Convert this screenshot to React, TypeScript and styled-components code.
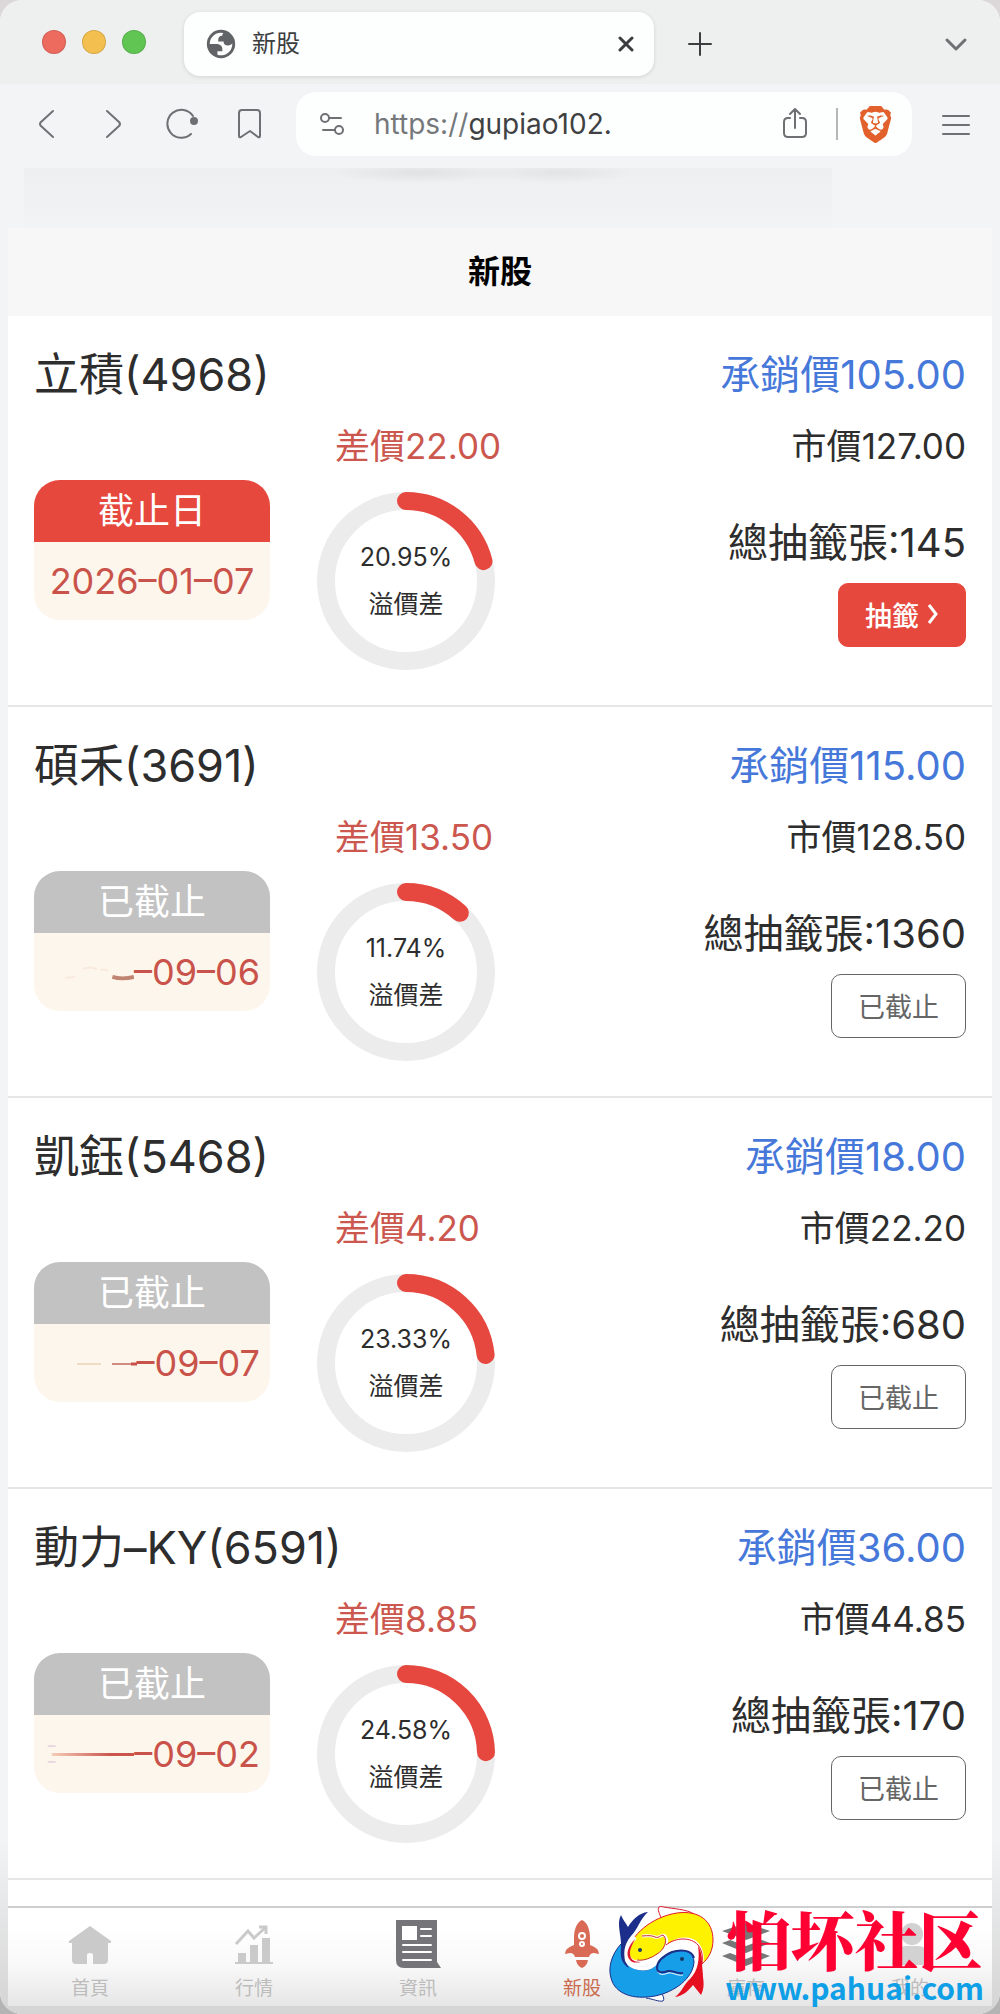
import type { ReactNode } from "react";
import styled, { createGlobalStyle } from "styled-components";
import { SiBrave } from "react-icons/si";

const GlobalStyle = createGlobalStyle`
  * {
    box-sizing: border-box;
  }

  body {
    margin: 0;
    background: linear-gradient(#dcd8d9, #b4b4b4);
    font-family: Inter, "Noto Sans CJK TC", sans-serif;
    color: #2d2d2d;
  }

  button {
    font-family: inherit;
    cursor: pointer;
  }
`;

const Window = styled.div`
  display: flex;
  flex-direction: column;
  min-height: 100vh;
  border-radius: 22px;
  overflow: hidden;
  background: #f3f4f6;
`;

const TabBar = styled.header`
  display: flex;
  align-items: center;
  height: 84px;
  padding: 4px 0 0 42px;
  background: #eeefef;
`;

const TrafficLights = styled.div`
  display: flex;
  gap: 16px;
  margin-right: 38px;
  margin-bottom: 4px;
`;

const Light = styled.span<{ $color: string }>`
  width: 24px;
  height: 24px;
  border: 1px solid rgba(0, 0, 0, 0.12);
  border-radius: 50%;
  background: ${(props) => props.$color};
`;

const Tab = styled.div`
  display: flex;
  flex: 0 1 470px;
  align-items: center;
  height: 64px;
  padding: 0 12px 0 20px;
  border-radius: 16px;
  background: #fdfefe;
  box-shadow: 0 1px 4px rgba(0, 0, 0, 0.12);
`;

const TabTitle = styled.span`
  flex: 1;
  margin-left: 14px;
  font-family: Inter, "Noto Sans CJK SC", sans-serif;
  font-size: 24px;
  line-height: 32px;
  color: #3b3d3f;
`;

const IconButton = styled.button<{ $width: number }>`
  display: flex;
  flex: 0 0 ${(props) => props.$width}px;
  align-items: center;
  justify-content: center;
  height: 64px;
  padding: 0;
  border: none;
  background: none;
  color: #6e7173;
`;

const TabListButton = styled(IconButton)`
  margin-left: auto;
`;

const Toolbar = styled.div`
  display: flex;
  align-items: center;
  height: 84px;
  padding: 0 0 4px 12px;
`;

const AddressBar = styled.div`
  display: flex;
  flex: 1;
  align-items: center;
  min-width: 0;
  height: 64px;
  margin-left: 12px;
  border-radius: 20px;
  background: #fdfefe;
`;

const Address = styled.a`
  flex: 1;
  margin-left: 6px;
  font-size: 28px;
  line-height: 36px;
  color: #3f4143;
  text-decoration: none;
`;

const Scheme = styled.span`
  color: #75787a;
`;

const Divider = styled.span`
  width: 2px;
  height: 32px;
  background: #b6b7b8;
`;

const ScrolledStrip = styled.div`
  height: 60px;
  margin-right: 168px;
  margin-left: 24px;
  background:
    radial-gradient(ellipse 90px 10px at 49% 5px, rgba(0, 0, 0, 0.06), transparent),
    radial-gradient(ellipse 80px 10px at 66% 5px, rgba(0, 0, 0, 0.05), transparent),
    linear-gradient(#eeeff1, #f2f3f5);
`;

const Page = styled.main`
  display: flex;
  flex: 1;
  flex-direction: column;
  padding: 0 8px 8px;
  background: linear-gradient(#f3f4f6 90%, #d4d4d4);
`;

const PageTitle = styled.h1`
  margin: 0;
  font-size: 32px;
  line-height: 88px;
  text-align: center;
  color: #000;
  background: #f7f7f7;
`;

const StockList = styled.ul`
  flex: 1;
  margin: 0;
  padding: 0;
  list-style: none;
  background: #fff;
`;

const StockRow = styled.li`
  padding: 30px 26px 35px;
  border-bottom: 2px solid #e6e6e7;
`;

const StockHeading = styled.div`
  display: flex;
  justify-content: space-between;
  line-height: 58px;
`;

const StockName = styled.h2`
  margin: 0;
  font-size: 45px;
  font-weight: 400;
`;

const OfferPrice = styled.span`
  font-size: 40px;
  color: #4678da;
`;

const StockBody = styled.div`
  display: grid;
  grid-template-columns: 236px 178px 1fr;
  column-gap: 47px;
  margin-top: 16px;
`;

const DeadlineCard = styled.div`
  align-self: start;
  height: 140px;
  margin-top: 60px;
  border-radius: 26px;
  overflow: hidden;
  background: #fdf6ec;
`;

const DeadlineLabel = styled.div<{ $open: boolean }>`
  font-size: 36px;
  line-height: 62px;
  text-align: center;
  color: #fff;
  background: ${(props) => (props.$open ? "#e6483d" : "#c2c2c2")};
`;

const DeadlineDate = styled.div<{ $open: boolean }>`
  display: flex;
  justify-content: ${(props) => (props.$open ? "center" : "flex-end")};
  align-items: center;
  height: 78px;
  padding-right: ${(props) => (props.$open ? 0 : 10)}px;
  font-size: 36px;
  white-space: nowrap;
  color: #c9534a;
`;

const Gap = styled.div`
  padding-left: 18px;
  font-size: 35px;
  line-height: 52px;
  white-space: nowrap;
  color: #cb574e;
`;

const Ring = styled.div`
  display: grid;
  width: 178px;
  height: 178px;
  margin-top: 20px;

  & > * {
    grid-area: 1 / 1;
  }
`;

const RingText = styled.div`
  align-self: center;
  font-size: 25px;
  line-height: 47px;
  text-align: center;
`;

const Side = styled.div`
  display: flex;
  flex-direction: column;
  align-items: flex-end;
  white-space: nowrap;
`;

const MarketPrice = styled.span`
  font-size: 35px;
  line-height: 52px;
`;

const Total = styled.span`
  margin-top: 45px;
  font-size: 40px;
  line-height: 52px;
`;

const DrawButton = styled.button<{ $open: boolean }>`
  display: flex;
  align-items: center;
  justify-content: center;
  gap: 8px;
  height: 64px;
  margin-top: 14px;
  padding: 0 26px 2px;
  border: 1px solid ${(props) => (props.$open ? "#e6483d" : "#666")};
  border-radius: 10px;
  background: ${(props) => (props.$open ? "#e6483d" : "#fff")};
  font-size: 27px;
  font-weight: ${(props) => (props.$open ? 500 : 400)};
  color: ${(props) => (props.$open ? "#fff" : "#666")};
`;

const BottomNav = styled.nav`
  position: relative;
  display: flex;
  height: 100px;
  border-top: 2px solid #cfcfd0;
  background: linear-gradient(#fff 20%, #f8f8f8 60%, #e6e6e6);
`;

const NavItem = styled.a<{ $active: boolean }>`
  display: flex;
  flex: 1;
  flex-direction: column;
  align-items: center;
  padding-top: 12px;
  font-size: 19px;
  line-height: 34px;
  color: ${(props) => (props.$active ? "#cb6b4e" : "#bcbcbc")};
  text-decoration: none;

  & > svg {
    width: 48px;
    height: 48px;
    margin-bottom: 4px;
  }
`;

const Watermark = styled.div`
  position: absolute;
  top: -8px;
  right: 8px;
  display: flex;
  gap: 4px;
  pointer-events: none;
`;

const WatermarkText = styled.div`
  display: flex;
  flex-direction: column;
  align-items: center;
  white-space: nowrap;
`;

const WatermarkName = styled.span`
  font-family: "Noto Serif CJK SC", "Noto Sans CJK SC", serif;
  font-size: 64px;
  font-weight: 900;
  line-height: 74px;
  color: #ff0033;
`;

const WatermarkSite = styled.span`
  font-family: "Noto Sans CJK SC", sans-serif;
  font-size: 30px;
  font-weight: 700;
  line-height: 26px;
  color: #0f9fe6;
`;

const Globe = () => (
  <svg width="34" height="34" viewBox="0 0 24 24" aria-hidden="true">
    <circle cx="12" cy="12" r="10" fill="#606466" />
    <path
      fill="#fdfefe"
      d="M4 12h4.400c3.407.022 4.922 1.730 4.543 5.127H9.488v2.470a8.004 8.004 0 0 0 10.498-8.083C19.327 12.504 18.332 13 17 13c-2.137 0-3.206-.916-3.206-2.750h-3.748c-.274-2.728.683-4.092 2.870-4.092 0-.975.327-1.597.811-1.970A8.004 8.004 0 0 0 4 12z"
    />
  </svg>
);

interface LineIconProps {
  width?: number;
  size?: number;
  children: ReactNode;
}

const LineIcon = ({ width = 2, size = 32, children }: LineIconProps) => (
  <svg
    width={size}
    height={size}
    viewBox={`0 0 ${size} ${size}`}
    fill="none"
    stroke="currentColor"
    strokeWidth={width}
    strokeLinecap="round"
    strokeLinejoin="round"
    aria-hidden="true"
  >
    {children}
  </svg>
);

const RADIUS = 80;
const LENGTH = 2 * Math.PI * RADIUS;

const PremiumRing = ({ percent }: { percent: number }) => (
  <Ring>
    <svg width="178" height="178" viewBox="0 0 178 178" fill="none" strokeWidth="18">
      <circle cx="89" cy="89" r={RADIUS} stroke="#ececec" />
      <circle
        cx="89"
        cy="89"
        r={RADIUS}
        stroke="#e6483f"
        strokeLinecap="round"
        strokeDasharray={`${(LENGTH * percent) / 100} ${LENGTH}`}
        transform="rotate(-90 89 89)"
      />
    </svg>
    <RingText>
      {percent.toFixed(2)}%
      <br />
      溢價差
    </RingText>
  </Ring>
);

interface Stock {
  name: string;
  offer: string;
  gap: string;
  market: string;
  total: number;
  percent: number;
  date: string;
  open: boolean;
  trace?: ReactNode;
}

const stocks: Stock[] = [
  {
    name: "立積(4968)",
    offer: "105.00",
    gap: "22.00",
    market: "127.00",
    total: 145,
    percent: 20.95,
    date: "2026–01–07",
    open: true,
  },
  {
    name: "碩禾(3691)",
    offer: "115.00",
    gap: "13.50",
    market: "128.50",
    total: 1360,
    percent: 11.74,
    date: "–09–06",
    open: false,
    trace: (
      <>
        <path d="M50 17q7-3 14 0M68 18q5-1 8 1M32 26l10-1" stroke="#f8e9dc" strokeWidth="2" />
        <path d="M80 25q10 3 22 0" stroke="#c08572" strokeWidth="4" />
      </>
    ),
  },
  {
    name: "凱鈺(5468)",
    offer: "18.00",
    gap: "4.20",
    market: "22.20",
    total: 680,
    percent: 23.33,
    date: "–09–07",
    open: false,
    trace: (
      <>
        <path d="M42 21h24" stroke="#f0dcc4" strokeWidth="2" />
        <path d="M77 21h19" stroke="#d08c80" strokeWidth="2" />
        <path d="M96 21h8" stroke="#c9534a" strokeWidth="3" />
      </>
    ),
  },
  {
    name: "動力–KY(6591)",
    offer: "36.00",
    gap: "8.85",
    market: "44.85",
    total: 170,
    percent: 24.58,
    date: "–09–02",
    open: false,
    trace: (
      <>
        <linearGradient id="fade" x1="0" x2="1">
          <stop offset="0" stopColor="#f5cdb9" />
          <stop offset="0.7" stopColor="#c9534a" />
        </linearGradient>
        <path d="M14 12h8M14 28h8" stroke="#e8d5df" strokeWidth="2" />
        <rect x="18" y="19" width="86" height="3" fill="url(#fade)" />
      </>
    ),
  },
];

const navItems = [
  {
    label: "首頁",
    icon: (
      <path
        fill="#cacaca"
        d="M24 6 45 21q1 2-2 2h-1v17q0 4-4 4H27V35q0-2-3-2t-3 2v9H10q-4 0-4-4V23H5q-3 0-2-2z"
      />
    ),
  },
  {
    label: "行情",
    icon: (
      <g fill="#cacaca">
        <path d="M5 42h38v2H5zM8 33h8v9H8zM20 25h8v17h-8zM32 18h8v24h-8z" />
        <path
          d="m6 24 12-13 6 7L36 7M29 7h7v7"
          fill="none"
          stroke="#cacaca"
          strokeWidth="3"
        />
      </g>
    ),
  },
  {
    label: "資訊",
    icon: (
      <>
        <path fill="#747479" d="M2 0h41v42l4 6H10q-8 0-8-8z" />
        <path fill="#fff" d="M8 6h15v14H8z" />
        <path
          stroke="#fff"
          strokeWidth="2"
          strokeLinecap="round"
          d="M27 9h10M27 16h10M9 25h28M9 32h28M9 40h28"
        />
      </>
    ),
  },
  {
    label: "新股",
    active: true,
    icon: (
      <>
        <path
          fill="#d86a56"
          d="M24 0c5 2 8 9 8 18v7q9 3 9 9l-5-1q-4 0-5 4H17q-1-4-5-4l-5 1q0-6 9-9v-7C16 9 19 2 24 0zM18 40h12q-1 6-6 8-5-2-6-8z"
        />
        <circle cx="24" cy="16" r="3" fill="none" stroke="#fff" strokeWidth="2" />
        <circle cx="24" cy="24" r="2" fill="none" stroke="#fff" strokeWidth="2" />
      </>
    ),
  },
  {
    label: "庫存",
    icon: (
      <g fill="#77777a">
        <path d="M24 3 48 11 24 20 0 11z" />
        <path d="m0 23 8-3 16 6 16-6 8 3-24 10zM0 36l8-3 16 6 16-6 8 3-24 10z" />
      </g>
    ),
  },
  {
    label: "我的",
    icon: (
      <g fill="#d2d2d2">
        <circle cx="26" cy="14" r="11" />
        <path d="M6 45q0-18 14-19h12q14 1 14 19z" />
      </g>
    ),
  },
];

const FishLogo = () => (
  <svg width="120" height="110" viewBox="0 0 120 110" aria-hidden="true">
    <path
      d="M60 18c-1-4-4-8-2-11q1-1 5 0c10 2 22 2 30 7"
      fill="#fff"
      stroke="#e0182d"
      strokeWidth="1"
    />
    <path
      d="M61 87c-3 6 4 10 1 14-4 1-10-2-17-3"
      fill="#fff"
      stroke="#1b2f8a"
      strokeWidth="1"
    />
    <path
      d="M27 52C29 36 50 17 76 13c22-3 36 8 36 27 0 10-4 18-11 24 0-13-6-22-20-24-14-2-20 14-29 19-8 5-17 6-21 3q-5-4-4-10z"
      fill="#fff200"
      stroke="#e0182d"
      strokeWidth="1"
    />
    <path
      d="M70 43c14-8 28-1 31 12 2 9-3 18-7 23-2-10-12-25-24-35z"
      fill="#fff"
    />
    <path
      d="M34 37c-9 9-10 18-5 23 3 3 9 4 17 2 12-3 17-12 25-18 9-6 20-5 25 1 4 5 5 10 4 17"
      fill="none"
      stroke="#fff"
      strokeWidth="5"
    />
    <path
      d="M41 36q10-1 13 1c5 2 6-4 10-1 4 5 1 15-7 20-6 4-14 7-22 5"
      fill="none"
      stroke="#fff"
      strokeWidth="3"
    />
    <path
      d="M41 36q10-1 13 1c5 2 6-4 9-1 4 5 0 14-7 18-6 4-13 7-20 6"
      fill="none"
      stroke="#c62828"
      strokeWidth="1"
    />
    <path d="M34 39c-7 7-10 16-5 21 2 3 6 3 11 2-8 0-11-3-11-9 0-5 3-9 5-14z" fill="#e0182d" />
    <path
      d="M65 45c10-8 25-8 32 0 4 5 5 11 4 18"
      fill="none"
      stroke="#e0182d"
      strokeWidth="1"
    />
    <path
      d="M20 44C10 55 7 68 10 78c4 16 22 22 44 18 20-4 38-18 39-34 0-10-10-14-21-11-13 3-14 17-27 19-14 1-22-7-23-17-1-4 0-6-2-9z"
      fill="#169fe8"
      stroke="#1b2f8a"
      strokeWidth="1"
    />
    <path
      d="M22 49c1 14 8 20 20 20 15 0 16-15 29-19 10-3 21 0 23 8"
      fill="none"
      stroke="#fff"
      strokeWidth="3"
    />
    <path
      d="M56 68c0 6 4 8 11 5 5-1 8 3 15 2"
      fill="none"
      stroke="#fff"
      strokeWidth="1"
    />
    <path
      d="M93 58c-2-8-13-9-22-6-9 4-15 10-15 16 0 5 6 5 11 3 5-1 8 3 15 2"
      fill="none"
      stroke="#1b2f8a"
      strokeWidth="2"
    />
    <path
      d="M20 48c1-12-5-24 0-33 2 5 5 8 7 12 5-8 11-14 20-15-8 7-10 17-17 24-8 10-7 17-6 25l4 7c-7-4-9-10-8-20z"
      fill="#1b2f8a"
    />
    <path
      d="M97 46q4 6 4 16c0 6 1 10 1 15 1 7 1 12-2 18l-8-10c-5 6-10 11-18 12 7-5 9-13 15-18 8-8 10-20 8-33z"
      fill="#e50f20"
    />
    <circle cx="39" cy="50" r="2" fill="#173a64" />
    <circle cx="81" cy="59" r="2" fill="#173a64" />
  </svg>
);

const BrowserChrome = () => (
  <>
    <TabBar>
      <TrafficLights>
        <Light $color="#ed6a5f" />
        <Light $color="#f3bf4f" />
        <Light $color="#61c554" />
      </TrafficLights>
      <Tab>
        <Globe />
        <TabTitle>新股</TabTitle>
        <IconButton $width={32} aria-label="Close tab">
          <LineIcon size={16} width={3}>
            <path d="m2 2 12 12M14 2 2 14" stroke="#3b3d3f" />
          </LineIcon>
        </IconButton>
      </Tab>
      <IconButton $width={92} aria-label="New tab">
        <LineIcon size={26} width={2}>
          <path d="M13 2v22M2 13h22" stroke="#3b3d3f" />
        </LineIcon>
      </IconButton>
      <TabListButton $width={88} aria-label="Tab list">
        <LineIcon size={24} width={3}>
          <path d="m3 8 9 9 9-9" />
        </LineIcon>
      </TabListButton>
    </TabBar>
    <Toolbar>
      <IconButton $width={68} aria-label="Back">
        <LineIcon>
          <path d="M23 3 11 14q-2 2 0 4l12 11" />
        </LineIcon>
      </IconButton>
      <IconButton $width={68} aria-label="Forward">
        <LineIcon>
          <path d="m9 3 12 11q2 2 0 4L9 29" />
        </LineIcon>
      </IconButton>
      <IconButton $width={68} aria-label="Reload">
        <LineIcon>
          <path d="M25 26A14 14 0 1 1 27 8" />
          <circle cx="28" cy="13" r="3" fill="currentColor" />
        </LineIcon>
      </IconButton>
      <IconButton $width={68} aria-label="Bookmark">
        <LineIcon>
          <path d="M5 5q0-3 3-3h15q3 0 3 3v23q0 2-2 1l-8-6-9 6q-2 1-2-1z" />
        </LineIcon>
      </IconButton>
      <AddressBar>
        <IconButton $width={72} aria-label="Site settings">
          <LineIcon>
            <circle cx="9" cy="10" r="4" />
            <circle cx="23" cy="22" r="4" />
            <path d="M13 10h12M7 22h12" />
          </LineIcon>
        </IconButton>
        <Address href="#">
          <Scheme>https://</Scheme>gupiao102.
        </Address>
        <IconButton $width={82} aria-label="Share">
          <LineIcon>
            <path d="M11 10H9q-4 0-4 4v11q0 4 4 4h14q4 0 4-4V14q0-4-4-4h-2M16 20V1M11 6l5-5 5 5" />
          </LineIcon>
        </IconButton>
        <Divider />
        <IconButton $width={74} aria-label="Brave Shields">
          <SiBrave size={37} color="#e2602c" />
        </IconButton>
      </AddressBar>
      <IconButton $width={88} aria-label="Menu">
        <LineIcon>
          <path d="M3 8h26M3 17h26M3 26h26" />
        </LineIcon>
      </IconButton>
    </Toolbar>
  </>
);

const StockItem = ({ stock }: { stock: Stock }) => (
  <StockRow>
    <StockHeading>
      <StockName>{stock.name}</StockName>
      <OfferPrice>承銷價{stock.offer}</OfferPrice>
    </StockHeading>
    <StockBody>
      <DeadlineCard>
        <DeadlineLabel $open={stock.open}>{stock.open ? "截止日" : "已截止"}</DeadlineLabel>
        <DeadlineDate $open={stock.open}>
          {stock.trace && (
            <svg width="102" height="40" viewBox="0 0 102 40" fill="none" aria-hidden="true">
              {stock.trace}
            </svg>
          )}
          {stock.date}
        </DeadlineDate>
      </DeadlineCard>
      <div>
        <Gap>差價{stock.gap}</Gap>
        <PremiumRing percent={stock.percent} />
      </div>
      <Side>
        <MarketPrice>市價{stock.market}</MarketPrice>
        <Total>總抽籤張:{stock.total}</Total>
        <DrawButton $open={stock.open}>
          {stock.open ? "抽籤" : "已截止"}
          {stock.open && (
            <svg width="12" height="22" viewBox="0 0 12 22" fill="none" aria-hidden="true">
              <path d="m2 2 7 9-7 9" stroke="#fff" strokeWidth="3" />
            </svg>
          )}
        </DrawButton>
      </Side>
    </StockBody>
  </StockRow>
);

const App = () => {
  return (
    <>
      <GlobalStyle />
      <Window>
        <BrowserChrome />
        <ScrolledStrip />
        <Page>
          <PageTitle>新股</PageTitle>
          <StockList>
            {stocks.map((stock) => (
              <StockItem key={stock.name} stock={stock} />
            ))}
          </StockList>
          <BottomNav>
            {navItems.map((item) => (
              <NavItem key={item.label} href="#" $active={!!item.active}>
                <svg viewBox="0 0 48 48" fill="none" aria-hidden="true">
                  {item.icon}
                </svg>
                {item.label}
              </NavItem>
            ))}
            <Watermark>
              <FishLogo />
              <WatermarkText>
                <WatermarkName>怕坏社区</WatermarkName>
                <WatermarkSite>www.pahuai.com</WatermarkSite>
              </WatermarkText>
            </Watermark>
          </BottomNav>
        </Page>
      </Window>
    </>
  );
};

export default App;
